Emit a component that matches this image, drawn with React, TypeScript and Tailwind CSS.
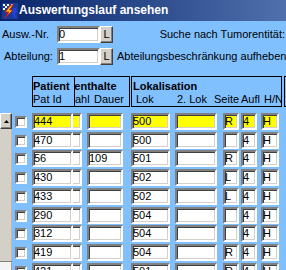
import clsx from "clsx";

type Row = {
  id: string;
  dauer?: string;
  lok: string;
  seite?: string;
  hl?: boolean;
  h: string;
};

const rows: Row[] = [
  { id: "444", lok: "500", seite: "R", hl: true, h: "h-[19px]" },
  { id: "470", lok: "500", h: "h-[18px]" },
  { id: "56", dauer: "109", lok: "501", seite: "R", h: "h-[19px]" },
  { id: "430", lok: "502", seite: "L", h: "h-[19px]" },
  { id: "433", lok: "502", seite: "L", h: "h-[19px]" },
  { id: "290", lok: "504", h: "h-[18px]" },
  { id: "312", lok: "504", h: "h-[19px]" },
  { id: "419", lok: "504", seite: "R", h: "h-[19px]" },
  { id: "421", lok: "501", seite: "R", h: "h-[19px]" },
];

const sunken =
  "border-2 border-t-[#808080] border-l-[#808080] border-r-white border-b-white shadow-[inset_1px_1px_0_#404040,inset_-1px_-1px_0_#d4d0c8]";
const raised =
  "border border-t-white border-l-white border-r-[#404040] border-b-[#404040] bg-[#d4d0c8] shadow-[inset_-1px_-1px_0_#808080]";

function Field({ value, w, hl }: { value?: string; w: string; hl?: boolean }) {
  return (
    <div
      className={clsx(
        "h-[17px] shrink-0 overflow-hidden whitespace-nowrap leading-[13px]",
        sunken,
        w,
        hl ? "bg-[#ffff00]" : "bg-white"
      )}
    >
      {value}
    </div>
  );
}

function LButton() {
  return (
    <div
      className={clsx(
        "flex h-[17px] w-[13px] shrink-0 items-center justify-center leading-none",
        raised
      )}
    >
      L
    </div>
  );
}

function AppIcon() {
  return (
    <svg width="16" height="16" viewBox="0 0 16 16" className="shrink-0">
      <rect x="0" y="0" width="16" height="16" fill="#1a3a9a" />
      <path d="M1 1h2v2H1zM5 1h2v2H5zM3 3h2v2H3zM1 5h2v2H1zM7 3h2v2H7zM9 1h2v2H9z" fill="#fff" />
      <path d="M9 2 L3 9 H7 L3 15 L11 7 H7.5 L11 2Z" fill="#ffd800" stroke="#e01010" strokeWidth="1" />
      <path d="M11 5 h3 l1 5 h-2 l1 5 h-2 l-2 -5z" fill="#2040e0" />
    </svg>
  );
}

export default function App() {
  return (
    <div className="h-[270px] w-[286px] overflow-hidden bg-[#80c0ff] font-['Liberation_Sans',Arial,sans-serif] text-[11px] leading-[13px] text-black">
      <div className="flex h-[21px] items-center gap-[1px] bg-gradient-to-r from-[#0a246a] to-[#4f70ac] pl-[2px]">
        <AppIcon />
        <span className="text-[12px] font-bold text-white">Auswertungslauf ansehen</span>
      </div>

      <div className="mt-[5px] flex h-[17px] items-center">
        <span className="w-[57px] shrink-0 pl-[2px]">Ausw.-Nr.</span>
        <Field value="0" w="w-[43px]" />
        <LButton />
        <span className="ml-auto whitespace-nowrap pr-[1px]">Suche nach Tumorentität:</span>
      </div>

      <div className="mt-[5px] flex h-[17px] items-center">
        <span className="w-[57px] shrink-0 pl-[4px]">Abteilung:</span>
        <Field value="1" w="w-[43px]" />
        <LButton />
        <span className="ml-[4px] whitespace-nowrap">Abteilungsbeschränkung aufheben</span>
      </div>

      <div className="mt-[11px] flex h-[31px]">
        <div className="w-[32px] shrink-0" />
        <div className="w-[43px] shrink-0 overflow-hidden border border-black pt-[3px]">
          <div className="font-bold">Patient</div>
          <div>Pat Id</div>
        </div>
        <div className="w-[211px] shrink-0 overflow-hidden">
          <div className="-ml-[21px] flex h-[31px]">
            <div className="w-[76px] shrink-0 overflow-hidden whitespace-nowrap border border-black pl-[1px] pt-[3px]">
              <div className="font-bold">Aufenthalte</div>
              <div className="flex">
                <span className="w-[38px] shrink-0">Anzahl</span>
                <span>Dauer</span>
              </div>
            </div>
            <div className="ml-[1px] w-[151px] shrink-0 overflow-hidden whitespace-nowrap border border-black pl-[1px] pt-[3px]">
              <div className="font-bold">Lokalisation</div>
              <div className="flex pl-[3px]">
                <span className="w-[41px] shrink-0">Lok</span>
                <span className="w-[37px] shrink-0">2. Lok</span>
                <span className="w-[27px] shrink-0">Seite</span>
                <span className="w-[23px] shrink-0">Aufl</span>
                <span>H/N</span>
              </div>
            </div>
            <div className="ml-[2px] w-[60px] shrink-0 border border-black" />
          </div>
        </div>
      </div>

      <div className="mt-[6px] flex">
        <div className="flex w-[12px] shrink-0 flex-col">
          <div className={clsx("flex h-[16px] items-center justify-center", raised)}>
            <svg width="5" height="3" viewBox="0 0 5 3">
              <path d="M2.5 0 L5 3 H0Z" fill="#000" />
            </svg>
          </div>
          <div className="h-[132px] border-r border-[#bdb9b1] bg-[#d4d0c8]" />
          <div className="h-[1px] bg-[#808080]" />
          <div className="h-[20px] border-r border-[#a0a0a0] bg-[#f4f4f4]" />
        </div>

        <div className="flex flex-col">
          {rows.map((r) => (
            <div key={r.id} className={clsx("flex shrink-0 items-start", r.h)}>
              <div className={clsx("ml-[3px] mt-[3px] h-[12px] w-[12px] shrink-0 bg-white", sunken)} />
              <div className="ml-[5px]">
                <Field value={r.id} w="w-[41px]" hl={r.hl} />
              </div>
              <div className="w-[213px] shrink-0 overflow-hidden">
                <div className="-ml-[18px] flex">
                  <Field w="w-[27px]" hl={r.hl} />
                  <div className="ml-[5px]">
                    <Field value={r.dauer} w="w-[36px]" hl={r.hl} />
                  </div>
                  <div className="ml-[8px]">
                    <Field value={r.lok} w="w-[39px]" hl={r.hl} />
                  </div>
                  <div className="ml-[5px]">
                    <Field w="w-[42px]" hl={r.hl} />
                  </div>
                  <div className="ml-[6px]">
                    <Field value={r.seite} w="w-[16px]" hl={r.hl} />
                  </div>
                  <div className="ml-[2px]">
                    <Field value="4" w="w-[16px]" hl={r.hl} />
                  </div>
                  <div className="ml-[4px]">
                    <Field value="H" w="w-[18px]" hl={r.hl} />
                  </div>
                </div>
              </div>
            </div>
          ))}
        </div>
      </div>
    </div>
  );
}
